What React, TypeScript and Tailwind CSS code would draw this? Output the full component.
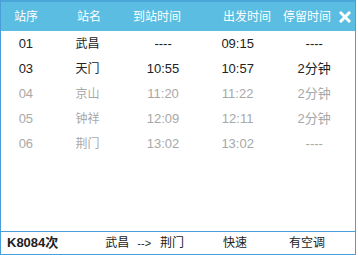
const stops = [
  { no: "01", name: "武昌", arrive: "----", depart: "09:15", stay: "----", passed: false },
  { no: "03", name: "天门", arrive: "10:55", depart: "10:57", stay: "2分钟", passed: false },
  { no: "04", name: "京山", arrive: "11:20", depart: "11:22", stay: "2分钟", passed: true },
  { no: "05", name: "钟祥", arrive: "12:09", depart: "12:11", stay: "2分钟", passed: true },
  { no: "06", name: "荆门", arrive: "13:02", depart: "13:02", stay: "----", passed: true },
];

const font = "font-['Liberation_Sans','Noto_Sans_CJK_SC',sans-serif]";

export default function App() {
  return (
    <div className={"w-[358px] h-[255px] bg-white " + font}>
      <div className="w-[356px] h-[255px] flex flex-col border-x border-[#4a9fd8]">
        <div className="h-[31px] shrink-0 flex items-center bg-[#5bbde2] border-t-2 border-[#4aa6d8] text-white text-[12px]">
          <span className="ml-[13px]">站序</span>
          <span className="ml-[39px]">站名</span>
          <span className="ml-[32px]">到站时间</span>
          <span className="ml-[42px]">出发时间</span>
          <span className="ml-[12px]">停留时间</span>
          {/* close */}
          <svg className="ml-[8px]" width="12" height="12" viewBox="0 0 12 12">
            <path d="M2 2 L10 10 M10 2 L2 10" stroke="#fff" strokeWidth="3" strokeLinecap="square" />
          </svg>
        </div>

        <div className="flex-1">
          {stops.map((s) => (
            <div
              key={s.no}
              className={
                "h-[25px] flex items-center text-[13px] " +
                (s.passed ? "text-[#a8a8a8]" : "text-[#222]")
              }
            >
              <span className="w-[50px] text-center">{s.no}</span>
              <span className="w-[74px] text-center text-[12px]">{s.name}</span>
              <span className="w-[78px] text-center">{s.arrive}</span>
              <span className="w-[72px] text-center">{s.depart}</span>
              <span className="w-[82px] text-center">{s.stay}</span>
            </div>
          ))}
        </div>

        <div className="h-[24px] shrink-0 flex items-center border-y border-[#4a9fd8] text-[#222] text-[12px]">
          <span className="ml-[6px] font-bold text-[13px]">K8084次</span>
          <span className="ml-[47px]">武昌</span>
          <span className="ml-[8px] text-[11px]">--&gt;</span>
          <span className="ml-[9px]">荆门</span>
          <span className="ml-[39px]">快速</span>
          <span className="ml-[42px]">有空调</span>
        </div>
      </div>
    </div>
  );
}
